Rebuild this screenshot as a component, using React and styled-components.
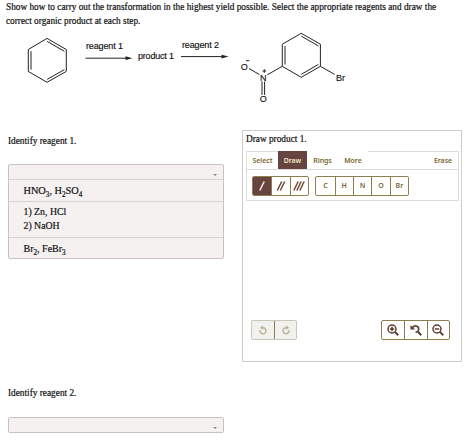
import React from "react";
import styled, { createGlobalStyle } from "styled-components";

const Theme = {
    serif: "'Liberation Serif', 'Times New Roman', serif",
    sans: "'Liberation Sans', Arial, sans-serif",
    tool: "'Noto Sans', 'Open Sans', sans-serif",
    brown: "#67443f",
    olive: "#8f7f50",
    oliveText: "#77662a",
    field: "#f6f1f1",
    line: "#d8d2d2",
};

const GlobalStyle = createGlobalStyle`
  * {
    box-sizing: border-box;
  }
  body {
    margin: 0;
    background: #fff;
    color: #111;
    font-family: ${Theme.serif};
  }
`;

const Page = styled.div`
  width: 474px;
  height: 441px;
  overflow: hidden;
`;

const Question = styled.p`
  height: 27px;
  margin: 0;
  padding: 0 0 0 6px;
  font-size: 9.29px;
  line-height: 14px;
  white-space: nowrap;
  -webkit-text-stroke: 0.2px #111;
`;

const Scheme = styled.svg`
  display: block;
  width: 474px;
  height: 103px;
  fill: none;
  stroke: #222;
  stroke-width: 1;

  text {
    font-family: ${Theme.sans};
    font-size: 9px;
    fill: #111;
    stroke: #111;
    stroke-width: 0.15;
  }
`;

const Columns = styled.div`
  display: flex;
  align-items: flex-start;
  gap: 18px;
  padding-left: 8px;
`;

const Answers = styled.div`
  width: 216px;
`;

const Label = styled.div`
  height: 13px;
  margin-top: ${(props) => props.$top}px;
  font-size: 9.3px;
  line-height: 13px;
  -webkit-text-stroke: 0.2px #111;
`;

const Dropdown = styled.div`
  margin-top: ${(props) => props.$top}px;
  border: 1px solid #c9c2c2;
  border-radius: 2px;
  background: ${Theme.field};
`;

const Value = styled.div`
  display: flex;
  justify-content: flex-end;
  align-items: flex-end;
  height: 14px;
  padding: 0 6px 3px 0;
`;

const Caret = styled.span`
  border: 2px solid transparent;
  border-top-color: #8b8484;
  border-bottom: 0;
`;

const Option = styled.div`
  height: ${(props) => props.$height}px;
  padding: ${(props) => props.$pad}px 0 0 14.5px;
  border-top: 1px solid ${Theme.line};
  font-size: ${(props) => props.$size || 10}px;
  line-height: 14px;
  -webkit-text-stroke: 0.2px #111;
`;

const Sub = styled.sub`
  font-size: 7.2px;
  line-height: 0;
  vertical-align: -2.5px;
`;

const Panel = styled.section`
  display: flex;
  flex-direction: column;
  width: 220px;
  height: 232px;
  padding: 2px 2px 0 3px;
  border: 1px solid #cdcdcd;
`;

const PanelTitle = styled.div`
  height: 18px;
  font-size: 9.3px;
  line-height: 13px;
  -webkit-text-stroke: 0.2px #111;
`;

const Toolbar = styled.div`
  height: 50px;
  border: 1px solid #dcdcdc;
`;

const Tabs = styled.div`
  display: flex;
  height: 18px;
  border-bottom: 1px solid #dcdcdc;
`;

const Tab = styled.div`
  width: ${(props) => props.$width}px;
  margin-top: ${(props) => (props.$raised ? -1 : 0)}px;
  margin-left: ${(props) => (props.$end ? "auto" : 0)};
  padding-top: ${(props) => (props.$raised ? 1 : 0)}px;
  background: ${(props) => (props.$active ? Theme.brown : props.$raised ? "#fff" : "transparent")};
  color: ${(props) => (props.$active ? "#f4e8c6" : Theme.oliveText)};
  font: 600 6.9px/18px ${Theme.tool};
  text-align: center;
`;

const Tools = styled.div`
  display: flex;
  gap: 6px;
  padding: 6px 0 0 5px;
`;

const Group = styled.div`
  display: flex;
  height: 20px;
  border: 1px solid ${(props) => (props.$disabled ? "#cac7b8" : Theme.olive)};
  border-radius: 2px;
  background: ${(props) => (props.$disabled ? "#f1f1ef" : "#fff")};
  overflow: hidden;
`;

const Cell = styled.div`
  display: flex;
  align-items: center;
  justify-content: center;
  width: ${(props) => props.$width || 18.4}px;
  background: ${(props) => (props.$active ? Theme.brown : "transparent")};
  color: ${Theme.oliveText};
  font: 600 7px/18px ${Theme.tool};

  & + & {
    border-left: 1px solid ${(props) => (props.$disabled ? "#c4c0aa" : Theme.olive)};
  }
`;

const Icon = styled.svg`
  width: ${(props) => props.$size}px;
  height: ${(props) => props.$size}px;
  fill: none;
  stroke: ${(props) => props.$color};
  stroke-width: ${(props) => props.$stroke};
`;

const Controls = styled.div`
  display: flex;
  justify-content: space-between;
  margin: auto 9px 21px 5px;
`;

function Bond({ count }) {
    const first = 7 - (count - 1) * 1.5;
    return (
        <Icon viewBox="0 0 14 14" $size={14} $color={count === 1 ? "#fff3d8" : "#6c4933"} $stroke={1.5}>
            {Array.from({ length: count }, (_, i) => (
                <path key={i} d={`M${first + i * 3 - 2.2} 11.5L${first + i * 3 + 2.2} 2.5`} />
            ))}
        </Icon>
    );
}

function Turn({ flip }) {
    return (
        <Icon viewBox="0 0 10 10" $size={10} $color="#b9b493" $stroke={1.5}>
            <g transform={flip ? "translate(10 0) scale(-1 1)" : undefined}>
                <path d="M2 5.2A3 3 0 1 0 5 2.7H4" />
                <path d="M4.8 .2L2 2.7L4.8 5.1Z" fill="#b9b493" stroke="none" />
            </g>
        </Icon>
    );
}

function Zoom({ plus }) {
    return (
        <Icon viewBox="0 0 12 12" $size={12} $color="#5f3e31" $stroke={1.5}>
            <circle cx="5" cy="5" r="4" />
            <path d={plus ? "M2.8 5H7.2M5 2.8V7.2" : "M2.8 5H7.2"} />
            <path d="M7.9 7.9L11.2 11.2" strokeWidth="2" />
        </Icon>
    );
}

function ZoomReset() {
    return (
        <Icon viewBox="0 0 12 12" $size={12} $color="#5f3e31" $stroke={1.6}>
            <path d="M2.5 4A3.2 3.2 0 1 1 5.5 8.3" />
            <path d="M.5 1V5.6H5.1Z" fill="#5f3e31" stroke="none" />
            <path d="M8 7.8L11.2 11.2" strokeWidth="2" />
        </Icon>
    );
}

function Reaction() {
    return (
        <Scheme viewBox="0 27 474 103">
            {/* benzene */}
            <path d="M47 38.4L66.3 49.5V71.4L47 82.3L28.3 71.4V49.5Z" />
            <path d="M47.2 41.4L64.4 51.3M64.4 69.6L47.2 79.4M31 51.2V69.7" />

            <text x="86" y="49" textLength="37">reagent 1</text>
            <path d="M85.5 58.2H127" />
            <path d="M125.5 56.3L132.5 58.2L125.5 60.1Z" fill="#222" stroke="none" />
            <text x="138" y="59" textLength="36">product 1</text>
            <text x="182" y="47.5" textLength="37">reagent 2</text>
            <path d="M181 56.6H223" />
            <path d="M221.5 54.7L228.5 56.6L221.5 58.5Z" fill="#222" stroke="none" />

            {/* 1-bromo-3-nitrobenzene */}
            <path d="M301.2 33.3L320.4 44.2V66.3L301.2 77.3L282.3 66.3V44.2Z" />
            <path d="M301.4 36.2L318.5 46M318.4 64.4L301.2 74.4M285 46V64.5" />
            <path d="M282.3 66.3L267.3 74.8M259.4 74.5L249 68.6M320.4 66.3L334.6 74.4" />
            <path d="M262 81.5V95M264.6 81.5V95" />
            <text x="240.8" y="69.8">O</text>
            <path d="M246 60.7H249.3" />
            <text x="260" y="80.5">N</text>
            <path d="M262.5 71H266.1M264.3 69.2V72.8" />
            <text x="259.8" y="102.3">O</text>
            <text x="336" y="80.5">Br</text>
        </Scheme>
    );
}

function App() {
    return (
        <Page>
            <GlobalStyle />
            <Question>
                Show how to carry out the transformation in the highest yield possible. Select the appropriate reagents and draw the
                <br />
                correct organic product at each step.
            </Question>
            <Reaction />
            <Columns>
                <Answers>
                    <Label $top={5}>Identify reagent 1.</Label>
                    <Dropdown $top={16}>
                        <Value><Caret /></Value>
                        <Option $height={22} $pad={4} $size={10.3}>HNO<Sub>3</Sub>, H<Sub>2</Sub>SO<Sub>4</Sub></Option>
                        <Option $height={36} $pad={3} $size={9.8}>1) Zn, HCl<br />2) NaOH</Option>
                        <Option $height={21} $pad={4}>Br<Sub>2</Sub>, FeBr<Sub>3</Sub></Option>
                    </Dropdown>
                    <Label $top={128}>Identify reagent 2.</Label>
                    <Dropdown $top={17}>
                        <Value><Caret /></Value>
                    </Dropdown>
                </Answers>
                <Panel>
                    <PanelTitle>Draw product 1.</PanelTitle>
                    <Toolbar>
                        <Tabs>
                            <Tab $width={31}>Select</Tab>
                            <Tab $width={29} $active $raised>Draw</Tab>
                            <Tab $width={31} $raised>Rings</Tab>
                            <Tab $width={30} $raised>More</Tab>
                            <Tab $width={30} $end>Erase</Tab>
                        </Tabs>
                        <Tools>
                            <Group>
                                <Cell $active><Bond count={1} /></Cell>
                                <Cell><Bond count={2} /></Cell>
                                <Cell><Bond count={3} /></Cell>
                            </Group>
                            <Group>
                                {["C", "H", "N", "O", "Br"].map((atom) => (
                                    <Cell key={atom}>{atom}</Cell>
                                ))}
                            </Group>
                        </Tools>
                    </Toolbar>
                    <Controls>
                        <Group $disabled>
                            <Cell $width={22} $disabled><Turn /></Cell>
                            <Cell $width={22} $disabled><Turn flip /></Cell>
                        </Group>
                        <Group>
                            <Cell $width={22.3}><Zoom plus /></Cell>
                            <Cell $width={22.3}><ZoomReset /></Cell>
                            <Cell $width={22.3}><Zoom /></Cell>
                        </Group>
                    </Controls>
                </Panel>
            </Columns>
        </Page>
    );
}

export default App;
